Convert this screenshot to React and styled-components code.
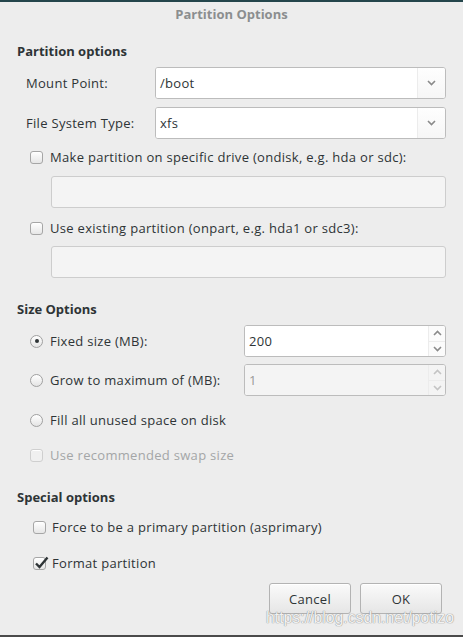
import React from "react";
import styled, { createGlobalStyle } from "styled-components";

const Global = createGlobalStyle`
  html, body { margin: 0; padding: 0; background: #ededed; }
  body { font-family: "Open Sans", "DejaVu Sans", sans-serif; font-size: 13px; color: #2e3436; letter-spacing: 0.3px; }
  * { box-sizing: border-box; }
`;

const Dialog = styled.div`
  position: relative;
  width: 463px;
  height: 637px;
  background: #ededed;
  border-top: 2px solid #24464c;
  border-bottom: 2px solid #4a4a4a;
  display: flex;
  flex-direction: column;
  overflow: hidden;
`;

const Title = styled.div`
  height: 24px;
  display: flex;
  align-items: center;
  justify-content: center;
  font-weight: 700;
  font-size: 13px;
  letter-spacing: 0;
  color: #8b8e8f;
`;

const Content = styled.div`
  padding: 0 17px;
  display: flex;
  flex-direction: column;
`;

const Heading = styled.div`
  height: 18px;
  line-height: 18px;
  font-weight: 700;
  font-size: 13px;
  letter-spacing: 0;
  margin-top: ${(p) => p.$mt}px;
`;

const FieldRow = styled.div`
  display: flex;
  align-items: center;
  margin-top: ${(p) => p.$mt}px;
  padding-left: ${(p) => p.$pl || 0}px;
`;

const FieldLabel = styled.div`
  width: ${(p) => p.$w}px;
  flex: none;
`;

const Combo = styled.div`
  flex: 1;
  height: 32px;
  display: flex;
  background: #fff;
  border: 1px solid #bcbcbc;
  border-radius: 3px;
  overflow: hidden;
`;

const ComboText = styled.div`
  flex: 1;
  display: flex;
  align-items: center;
  padding-left: 4px;
  color: ${(p) => (p.$disabled ? "#9a9a9a" : "#2e3436")};
  background: ${(p) => (p.$disabled ? "#f4f4f4" : "#fff")};
`;

const ComboButton = styled.div`
  width: 28px;
  flex: none;
  display: flex;
  align-items: center;
  justify-content: center;
  border-left: 1px solid #ececec;
  background: linear-gradient(#fefefe, #f6f6f6);
`;

const SpinButtons = styled.div`
  width: 17px;
  flex: none;
  display: flex;
  flex-direction: column;
  border-left: 1px solid #ececec;
  background: ${(p) => (p.$disabled ? "#f4f4f4" : "#fbfbfb")};
`;

const SpinHalf = styled.div`
  flex: 1;
  display: flex;
  align-items: center;
  justify-content: center;
  & + & { border-top: 1px solid #ececec; }
`;

const CheckRow = styled.div`
  height: 18px;
  display: flex;
  align-items: center;
  gap: ${(p) => p.$gap || 7}px;
  margin-top: ${(p) => p.$mt}px;
  padding-left: ${(p) => p.$pl}px;
  color: ${(p) => (p.$disabled ? "#a4a6a7" : "#2e3436")};
`;

const Box = styled.div`
  position: relative;
  width: 13px;
  height: 13px;
  flex: none;
  border: 1px solid ${(p) => (p.$disabled ? "#cfcfcf" : "#a6a6a6")};
  border-radius: 3px;
  background: ${(p) =>
    p.$disabled ? "#f0f0f0" : "linear-gradient(#ffffff, #e6e6e6)"};
  box-shadow: inset 0 1px 0 #fff;
`;

const Check = styled.svg`
  position: absolute;
  left: 0px;
  top: -3px;
`;

const Radio = styled.div`
  width: 13px;
  height: 13px;
  flex: none;
  border: 1px solid #a0a0a0;
  border-radius: 50%;
  background: linear-gradient(#ffffff, #e4e4e4);
  display: flex;
  align-items: center;
  justify-content: center;
  &::after {
    content: "";
    display: ${(p) => (p.$on ? "block" : "none")};
    width: 4px;
    height: 4px;
    border-radius: 50%;
    background: #2e3436;
  }
`;

const Entry = styled.div`
  height: 32px;
  margin-top: ${(p) => p.$mt}px;
  margin-left: 34px;
  background: #f4f4f4;
  border: 1px solid #cdcdcd;
  border-radius: 3px;
`;

const SpinLabel = styled.div`
  width: ${(p) => p.$w}px;
  flex: none;
  display: flex;
  align-items: center;
  gap: 7px;
`;

const Buttons = styled.div`
  display: flex;
  justify-content: flex-end;
  gap: 9px;
  margin-top: 11px;
  padding-right: 4px;
`;

const Button = styled.div`
  width: 82px;
  height: 31px;
  display: flex;
  align-items: center;
  justify-content: center;
  border: 1px solid #b3b3b3;
  border-radius: 3px;
  background: linear-gradient(#fafafa, #e6e6e6);
  box-shadow: inset 0 1px 0 #fff;
  font-size: 13px;
`;

const Watermark = styled.div`
  position: absolute;
  left: 266px;
  top: 607px;
  font-family: "Liberation Sans", Arial, sans-serif;
  font-size: 15.8px;
  letter-spacing: 0;
  color: rgba(255, 255, 255, 0.9);
  text-shadow: 0 0 1px #8f8f8f, 0 0 1px #8f8f8f;
`;

const ChevronDown = ({ color = "#8a8a8a" }) => (
  <svg width="9" height="6" viewBox="0 0 9 6">
    <path d="M1 1 L4.5 4.5 L8 1" fill="none" stroke={color} strokeWidth="1.6" />
  </svg>
);

const ChevronUp = ({ color = "#8a8a8a" }) => (
  <svg width="9" height="6" viewBox="0 0 9 6">
    <path d="M1 5 L4.5 1.5 L8 5" fill="none" stroke={color} strokeWidth="1.6" />
  </svg>
);

const CheckBox = ({ checked, disabled }) => (
  <Box $disabled={disabled}>
    {checked && (
      <Check width="15" height="15" viewBox="0 0 15 15">
        <path d="M2 8.5 L5.5 12 L13.5 2.5" fill="none" stroke="#2e3436" strokeWidth="2.4" />
      </Check>
    )}
  </Box>
);

export default function App() {
  return (
    <>
      <Global />
      <Dialog>
        <Title>Partition Options</Title>
        <Content>
          <Heading $mt={16}>Partition options</Heading>
          <FieldRow $mt={7} $pl={9}>
            <FieldLabel $w={129}>Mount Point:</FieldLabel>
            <Combo>
              <ComboText>/boot</ComboText>
              <ComboButton><ChevronDown /></ComboButton>
            </Combo>
          </FieldRow>
          <FieldRow $mt={8} $pl={9}>
            <FieldLabel $w={129}>File System Type:</FieldLabel>
            <Combo>
              <ComboText>xfs</ComboText>
              <ComboButton><ChevronDown /></ComboButton>
            </Combo>
          </FieldRow>
          <CheckRow $mt={9} $pl={13}>
            <CheckBox />
            <span>Make partition on specific drive (ondisk, e.g. hda or sdc):</span>
          </CheckRow>
          <Entry $mt={10} />
          <CheckRow $mt={11} $pl={13}>
            <CheckBox />
            <span>Use existing partition (onpart, e.g. hda1 or sdc3):</span>
          </CheckRow>
          <Entry $mt={9} />

          <Heading $mt={22}>Size Options</Heading>
          <FieldRow $mt={7} $pl={13}>
            <SpinLabel $w={214}>
              <Radio $on />
              <span>Fixed size (MB):</span>
            </SpinLabel>
            <Combo>
              <ComboText>200</ComboText>
              <SpinButtons>
                <SpinHalf><ChevronUp /></SpinHalf>
                <SpinHalf><ChevronDown /></SpinHalf>
              </SpinButtons>
            </Combo>
          </FieldRow>
          <FieldRow $mt={7} $pl={13}>
            <SpinLabel $w={214}>
              <Radio />
              <span>Grow to maximum of (MB):</span>
            </SpinLabel>
            <Combo>
              <ComboText $disabled>1</ComboText>
              <SpinButtons $disabled>
                <SpinHalf><ChevronUp color="#c4c4c4" /></SpinHalf>
                <SpinHalf><ChevronDown color="#c4c4c4" /></SpinHalf>
              </SpinButtons>
            </Combo>
          </FieldRow>
          <CheckRow $mt={15} $pl={13}>
            <Radio />
            <span>Fill all unused space on disk</span>
          </CheckRow>
          <CheckRow $mt={17} $pl={13} $disabled>
            <CheckBox disabled />
            <span>Use recommended swap size</span>
          </CheckRow>

          <Heading $mt={24}>Special options</Heading>
          <CheckRow $mt={12} $pl={16} $gap={6}>
            <CheckBox />
            <span>Force to be a primary partition (asprimary)</span>
          </CheckRow>
          <CheckRow $mt={18} $pl={16} $gap={6}>
            <CheckBox checked />
            <span>Format partition</span>
          </CheckRow>
          <Buttons>
            <Button>Cancel</Button>
            <Button>OK</Button>
          </Buttons>
        </Content>
        <Watermark>https://blog.csdn.net/potizo</Watermark>
      </Dialog>
    </>
  );
}
